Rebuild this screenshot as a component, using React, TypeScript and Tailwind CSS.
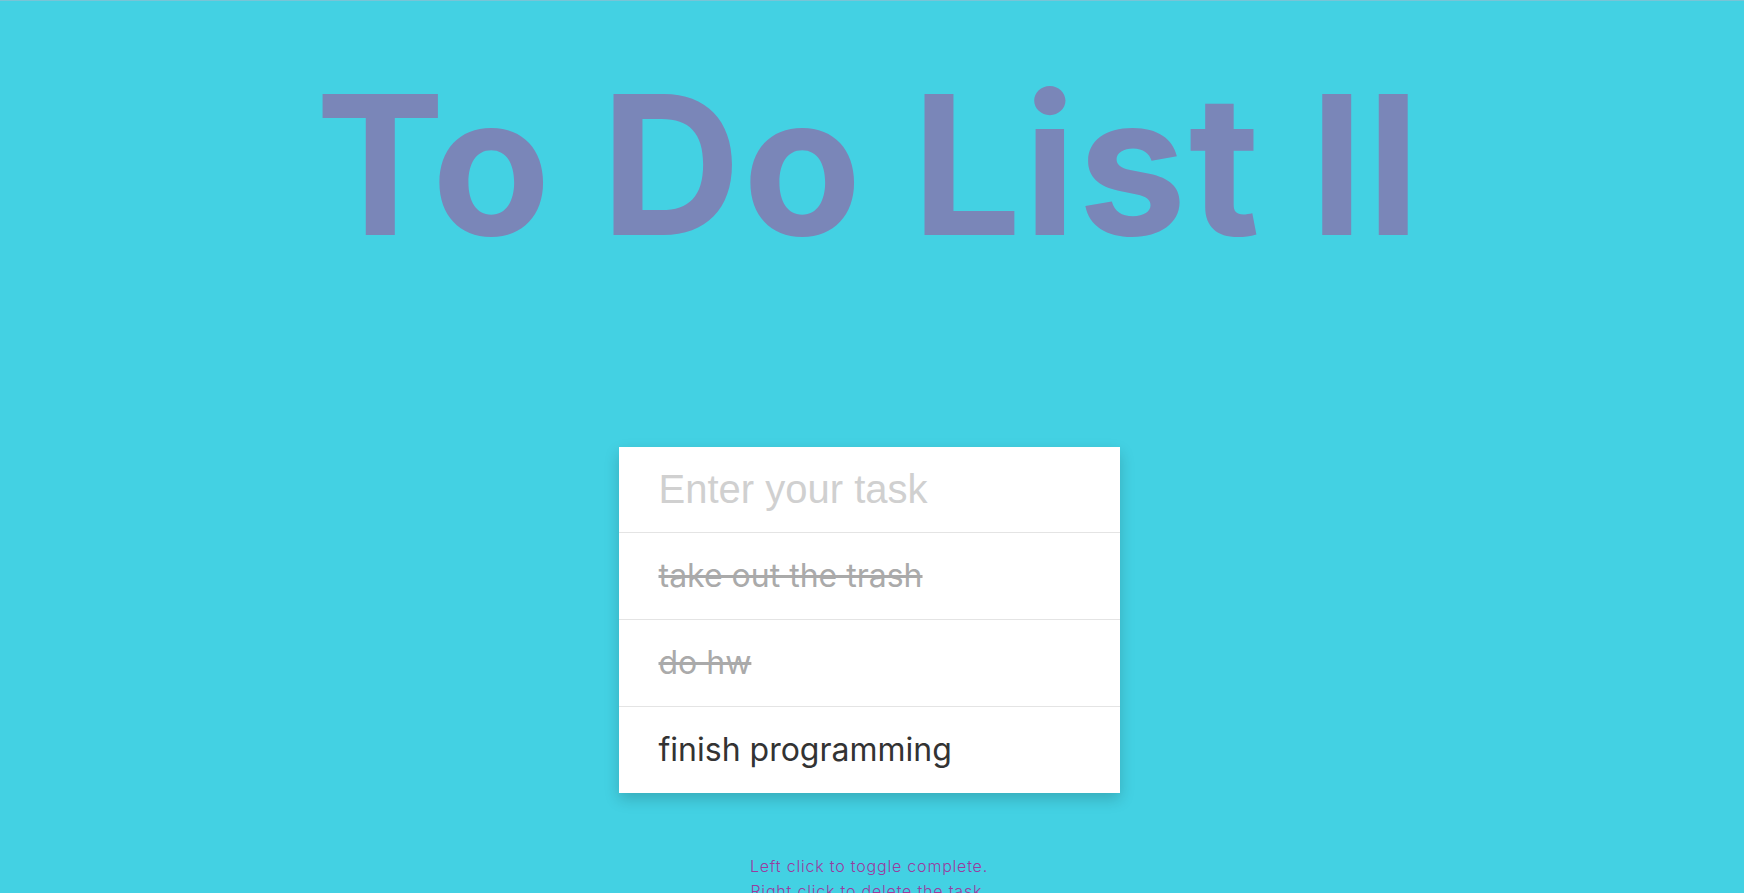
import React, { useState } from 'react';

type Task = { id: number; text: string; done: boolean };

const initialTasks: Task[] = [
  { id: 1, text: 'take out the trash', done: true },
  { id: 2, text: 'do hw', done: true },
  { id: 3, text: 'finish programming', done: false },
];

const App = () => {
  const [tasks, setTasks] = useState<Task[]>(initialTasks);
  const [value, setValue] = useState('');

  const addTask = (e: React.FormEvent) => {
    e.preventDefault();
    if (!value.trim()) return;
    setTasks([...tasks, { id: Date.now(), text: value.trim(), done: false }]);
    setValue('');
  };

  const toggle = (id: number) =>
    setTasks(tasks.map((t) => (t.id === id ? { ...t, done: !t.done } : t)));

  const remove = (e: React.MouseEvent, id: number) => {
    e.preventDefault();
    setTasks(tasks.filter((t) => t.id !== id));
  };

  return (
    <div className="min-h-screen bg-[#43d1e3] border-t border-[#79c4d6] font-['Inter',sans-serif] flex flex-col items-center overflow-hidden pr-[6px]">
      <h1 className="pt-[67px] text-[194px] leading-none font-bold text-[#7a86b8] tracking-[2px] text-center whitespace-nowrap">
        To Do List II
      </h1>

      <div className="mt-[185px] w-[501px] bg-white shadow-[0_6px_14px_rgba(0,0,0,0.18)]">
        <form onSubmit={addTask}>
          <input
            value={value}
            onChange={(e) => setValue(e.target.value)}
            placeholder="Enter your task"
            className="w-full h-[85px] px-[40px] text-[40px] font-['Liberation_Sans',Arial,sans-serif] text-[#333] placeholder:text-[#d0d0d0] outline-none"
          />
        </form>
        <ul>
          {tasks.map((t) => (
            <li
              key={t.id}
              onClick={() => toggle(t.id)}
              onContextMenu={(e) => remove(e, t.id)}
              className={
                t.done
                  ? 'h-[87px] border-t border-[#e4e4e4] px-[40px] flex items-center text-[32px] text-[#aaaaaa] line-through cursor-pointer select-none'
                  : 'h-[87px] border-t border-[#e4e4e4] px-[40px] flex items-center text-[32px] text-[#333] cursor-pointer select-none'
              }
            >
              {t.text}
            </li>
          ))}
        </ul>
      </div>

      <div className="mt-[61px] text-center text-[16px] leading-[25px] font-light tracking-[0.8px] text-[#9a3c9f]">
        <p>Left click to toggle complete.</p>
        <p>Right click to delete the task.</p>
      </div>
    </div>
  );
};

export default App;
